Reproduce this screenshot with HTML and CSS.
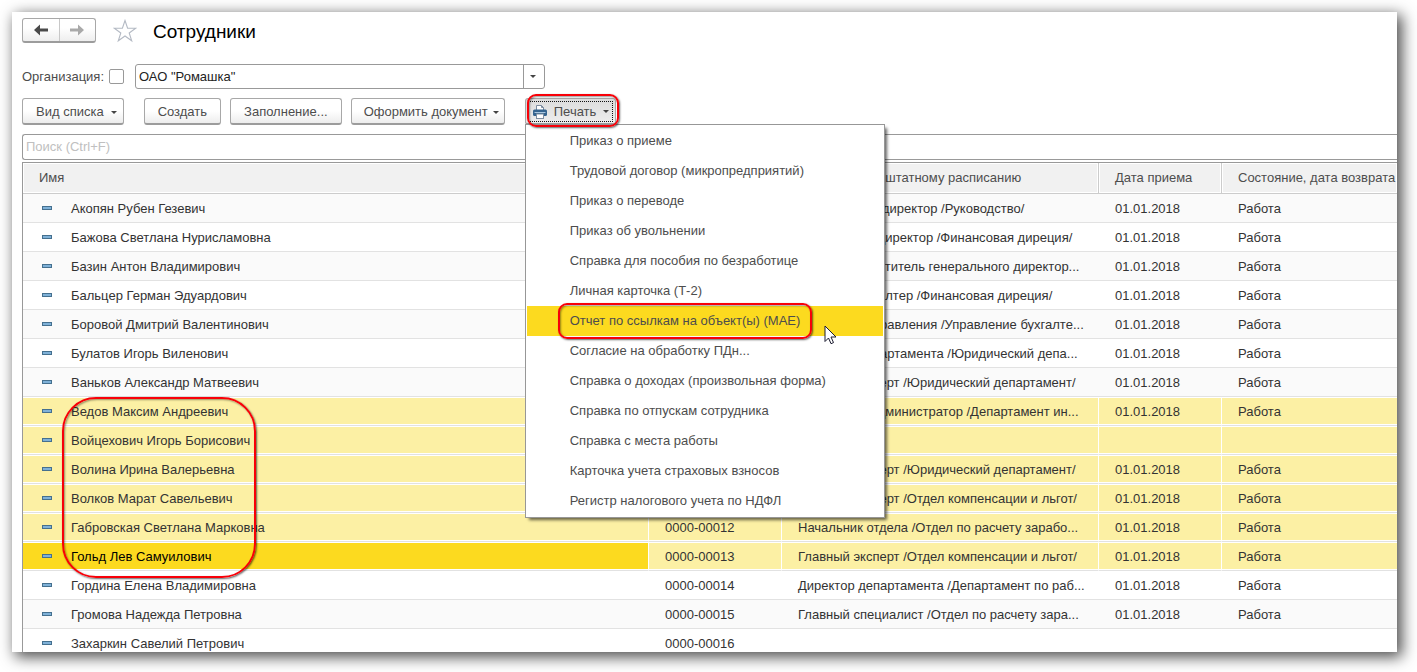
FILE: index.html
```html
<!DOCTYPE html>
<html lang="ru">
<head>
<meta charset="utf-8">
<title>Сотрудники</title>
<link rel="stylesheet" href="styles.css">
</head>
<body>
<main class="window">
  <header class="titlebar">
    <div class="nav">
      <button class="nav-button" type="button" aria-label="Назад">
        <svg width="14" height="12" viewBox="0 0 14 12"><path d="M0 6 6 .5V4.500H14V7.500H6V11.500Z" fill="#4a4a4a"/></svg>
      </button>
      <button class="nav-button" type="button" aria-label="Вперед">
        <svg width="14" height="12" viewBox="0 0 14 12"><path d="M14 6 8 .5V4.500H0V7.500H8V11.500Z" fill="#a9a9a9"/></svg>
      </button>
    </div>
    <button class="star" type="button" aria-label="В избранное">
      <svg width="24" height="24" viewBox="0 0 24 24"><path d="M12 1.500 14.600 9.200H22.700L16.200 14 18.700 21.800 12 17 5.300 21.800 7.800 14 1.300 9.200H9.400Z" fill="#fff" stroke="#b4bac4" stroke-width="1.100"/></svg>
    </button>
    <h1 class="title">Сотрудники</h1>
  </header>

  <div class="filter">
    <label for="org">Организация:</label>
    <input class="check" type="checkbox" aria-label="Отбор по организации">
    <div class="combo">
      <select class="combo-select" id="org"><option>ОАО "Ромашка"</option></select>
    </div>
  </div>

  <div class="toolbar">
    <button class="button button-list" type="button">Вид списка<span class="caret"></span></button>
    <button class="button" type="button">Создать</button>
    <button class="button" type="button">Заполнение...</button>
    <button class="button button-doc" type="button">Оформить документ<span class="caret"></span></button>
    <div class="print">
      <button class="button button-print" type="button">
        <svg width="14" height="14" viewBox="0 0 14 14"><path d="M3.500 6V.5H8.500L10.500 2.500V6" fill="#fff" stroke="#7d8da0"/><path d="M8.500 .5V2.500H10.500" fill="none" stroke="#7d8da0"/><rect y="4.500" width="14" height="6.500" rx="1.500" fill="#35648f"/><rect x="1.500" y="7" width="11" height="1" fill="#a9c7e0"/><rect x="3.500" y="9" width="7" height="4.500" fill="#fff" stroke="#7d8da0"/></svg>
        Печать<span class="caret"></span>
      </button>
      <span class="ring ring-print"></span>
      <div class="menu" role="menu">
        <button class="menu-item" role="menuitem" type="button">Приказ о приеме</button>
        <button class="menu-item" role="menuitem" type="button">Трудовой договор (микропредприятий)</button>
        <button class="menu-item" role="menuitem" type="button">Приказ о переводе</button>
        <button class="menu-item" role="menuitem" type="button">Приказ об увольнении</button>
        <button class="menu-item" role="menuitem" type="button">Справка для пособия по безработице</button>
        <button class="menu-item" role="menuitem" type="button">Личная карточка (Т-2)</button>
        <button class="menu-item active" role="menuitem" type="button">Отчет по ссылкам на объект(ы) (МАЕ)
          <span class="ring ring-item"></span>
          <svg class="cursor" width="13" height="20" viewBox="0 0 13 20"><path d="M1 1V16.500L4.500 13 7 18.700 9.500 17.600 7 12H12Z" fill="#fff" stroke="#1c1c30"/></svg>
        </button>
        <button class="menu-item" role="menuitem" type="button">Согласие на обработку ПДн...</button>
        <button class="menu-item" role="menuitem" type="button">Справка о доходах (произвольная форма)</button>
        <button class="menu-item" role="menuitem" type="button">Справка по отпускам сотрудника</button>
        <button class="menu-item" role="menuitem" type="button">Справка с места работы</button>
        <button class="menu-item" role="menuitem" type="button">Карточка учета страховых взносов</button>
        <button class="menu-item" role="menuitem" type="button">Регистр налогового учета по НДФЛ</button>
      </div>
    </div>
  </div>

  <input class="search" type="search" placeholder="Поиск (Ctrl+F)" aria-label="Поиск">

  <div class="list">
    <table class="grid">
      <colgroup><col class="col-name"><col class="col-code"><col class="col-post"><col class="col-date"><col></colgroup>
      <thead>
        <tr><th>Имя</th><th></th><th>Должность по штатному расписанию</th><th>Дата приема</th><th>Состояние, дата возврата</th></tr>
      </thead>
      <tbody>
        <tr><td>Акопян Рубен Гезевич</td><td></td><td>Генеральный директор /Руководство/</td><td>01.01.2018</td><td>Работа</td></tr>
        <tr><td>Бажова Светлана Нурисламовна</td><td></td><td>Финансовый директор /Финансовая диреция/</td><td>01.01.2018</td><td>Работа</td></tr>
        <tr><td>Базин Антон Владимирович</td><td></td><td>Первый заместитель генерального директор...</td><td>01.01.2018</td><td>Работа</td></tr>
        <tr><td>Бальцер Герман Эдуардович</td><td></td><td>Главный бухгалтер /Финансовая диреция/</td><td>01.01.2018</td><td>Работа</td></tr>
        <tr><td>Боровой Дмитрий Валентинович</td><td></td><td>Начальник управления /Управление бухгалте...</td><td>01.01.2018</td><td>Работа</td></tr>
        <tr><td>Булатов Игорь Виленович</td><td></td><td>Директор департамента /Юридический депа...</td><td>01.01.2018</td><td>Работа</td></tr>
        <tr><td>Ваньков Александр Матвеевич</td><td></td><td>Главный эксперт /Юридический департамент/</td><td>01.01.2018</td><td>Работа</td></tr>
        <tr class="selected"><td>Ведов Максим Андреевич</td><td></td><td>Системный администратор /Департамент ин...</td><td>01.01.2018</td><td>Работа</td></tr>
        <tr class="selected"><td>Войцехович Игорь Борисович</td><td></td><td></td><td></td><td></td></tr>
        <tr class="selected"><td>Волина Ирина Валерьевна</td><td></td><td>Главный эксперт /Юридический департамент/</td><td>01.01.2018</td><td>Работа</td></tr>
        <tr class="selected"><td>Волков Марат Савельевич</td><td></td><td>Главный эксперт /Отдел компенсации и льгот/</td><td>01.01.2018</td><td>Работа</td></tr>
        <tr class="selected"><td>Габровская Светлана Марковна</td><td>0000-00012</td><td>Начальник отдела /Отдел по расчету зарабо...</td><td>01.01.2018</td><td>Работа</td></tr>
        <tr class="selected current"><td>Гольд Лев Самуилович</td><td>0000-00013</td><td>Главный эксперт /Отдел компенсации и льгот/</td><td>01.01.2018</td><td>Работа</td></tr>
        <tr><td>Гордина Елена Владимировна</td><td>0000-00014</td><td>Директор департамента /Департамент по раб...</td><td>01.01.2018</td><td>Работа</td></tr>
        <tr><td>Громова Надежда Петровна</td><td>0000-00015</td><td>Главный специалист /Отдел по расчету зара...</td><td>01.01.2018</td><td>Работа</td></tr>
        <tr><td>Захаркин Савелий Петрович</td><td>0000-00016</td><td></td><td></td><td></td></tr>
      </tbody>
    </table>
    <span class="ring ring-names"></span>
  </div>
</main>
</body>
</html>
```
FILE: styles.css
```css
*, *::before { box-sizing: border-box; }

body {
  margin: 0;
  height: 100vh;
  padding: 12px 20px 20px 12px;
  display: flex;
  background: #fff;
  color: #4d4d4d;
  font: 13px/16px "Liberation Sans", Arial, sans-serif;
}

button, input, select { font: inherit; color: inherit; }

.window {
  flex: 1;
  min-width: 0;
  display: flex;
  flex-direction: column;
  overflow: hidden;
  padding: 6px 0 0 10px;
  background: #fff;
}

body::before {
  content: "";
  position: absolute;
  inset: 12px 20px 20px 12px;
  z-index: -1;
  box-shadow: 4px 4px 14px 1px rgba(0, 0, 0, .7);
}

.titlebar { display: flex; align-items: center; flex: none; height: 25px; }

.nav {
  display: flex;
  width: 74px;
  height: 25px;
  border: 1px solid #a8a8a8;
  border-bottom: 2px solid #9c9c9c;
  border-radius: 3px;
  background: linear-gradient(#fff 40%, #eee);
}

.nav-button {
  flex: 1;
  display: flex;
  align-items: center;
  justify-content: center;
  padding: 0;
  border: 0;
  background: none;
}

.nav-button + .nav-button { border-left: 1px solid #c8c8c8; }

.star { display: flex; margin-left: 17px; padding: 0; border: 0; background: none; }

.title { margin: 0 0 0 16px; padding-top: 2px; color: #000; font-size: 19px; line-height: 24px; font-weight: 400; }

.filter { display: flex; align-items: center; flex: none; margin-top: 21px; height: 25px; }

.check {
  appearance: none;
  width: 15px;
  height: 15px;
  margin: 0 11px 0 5px;
  border: 1px solid #999;
  border-radius: 2px;
  background: #fff;
}

.combo { position: relative; width: 410px; }

.combo-select {
  appearance: none;
  display: block;
  width: 100%;
  height: 25px;
  padding: 0 24px 0 3px;
  border: 1px solid #999;
  border-radius: 3px;
  background: linear-gradient(#999, #999) right 20px top / 1px 100% no-repeat #fff;
  color: #222;
}

.combo::after {
  content: "";
  position: absolute;
  right: 9px;
  top: 11px;
  border: solid transparent;
  border-width: 3px 3px 0;
  border-top-color: #444;
}

.toolbar { display: flex; flex: none; gap: 9px; margin-top: 9px; height: 27px; }

.button {
  display: flex;
  align-items: center;
  height: 27px;
  padding: 2px 13px 0;
  border: 1px solid #a8a8a8;
  border-bottom: 2px solid #9c9c9c;
  border-radius: 3px;
  background: linear-gradient(#fff 50%, #ededed);
  white-space: nowrap;
}

.caret {
  margin-left: 7px;
  border: solid transparent;
  border-width: 3px 3px 0;
  border-top-color: #444;
}

.button-list { padding-right: 6px; margin-right: 11px; }
.button-doc { padding: 2px 5px 0 12px; margin-right: 11px; }
.button-doc .caret { margin-left: 5px; }

.print { position: relative; }

.button-print {
  gap: 7px;
  padding: 1px 6px 0 7px;
  background: linear-gradient(#dcdcdc, #eee);
  outline: 1px dotted #111;
  outline-offset: -4px;
}

.button-print .caret { margin-left: 0; }

.ring {
  position: absolute;
  border: 2px solid #f80008;
  border-radius: 9px;
  box-shadow: 1px 1px 2px rgba(0, 0, 0, .6), inset 1px 1px 2px rgba(0, 0, 0, .4);
  pointer-events: none;
}

.ring-print { inset: -4px -3px -2px 2px; z-index: 3; }

.menu {
  position: absolute;
  top: 26px;
  left: 0;
  z-index: 2;
  width: 360px;
  padding: 1px;
  border: 1px solid #979797;
  background: #fff;
  box-shadow: 3px 3px 3px -1px rgba(0, 0, 0, .6);
}

.menu-item {
  position: relative;
  display: block;
  width: 100%;
  height: 30px;
  padding: 0 0 0 43px;
  border: 0;
  background: none;
  text-align: left;
}

.menu-item.active { background: #fcda1f; }

.ring-item { inset: -3px 71px -3px 31px; z-index: 1; }

.cursor { position: absolute; left: 297px; top: 19px; z-index: 2; }

.search {
  appearance: none;
  flex: none;
  height: 26px;
  margin: 9px 0 2px;
  padding: 0 3px 2px;
  border: 1px solid #999;
  border-right: 0;
  border-radius: 3px 0 0 3px;
  background: #fff;
}

.search::placeholder { color: #c0c0c0; opacity: 1; }

.list {
  position: relative;
  flex: 1;
  min-height: 0;
  border: solid #999;
  border-width: 1px 0 0 1px;
}

.grid { width: 100%; table-layout: fixed; border-collapse: separate; border-spacing: 0; }

.col-name { width: 625px; }
.col-code { width: 133px; }
.col-post { width: 317px; }
.col-date { width: 123px; }

.grid th {
  height: 31px;
  padding: 0 0 0 16px;
  border: solid #ccc;
  border-width: 0 0 1px 1px;
  background: #f1f1f1;
  box-shadow: inset 0 0 0 1px #fff;
  font-weight: 400;
  text-align: left;
  white-space: nowrap;
}

.grid th:first-child { border-left: 0; }

.grid td {
  height: 29px;
  padding: 2px 0 0 17px;
  border-bottom: 1px solid #e2e2e2;
  color: #333;
  white-space: nowrap;
}

.grid td:first-child { padding-left: 16px; }

.grid tr:nth-child(odd) td { background: #fafafa; }

.grid td:first-child::before {
  content: "";
  display: inline-block;
  width: 10px;
  height: 4px;
  margin: 0 19px 3px 3px;
  border: 1px solid #45708f;
  background: #7fb1d8;
}

.grid tbody .selected td {
  background: #fcf0a4;
  border-left: 1px solid #fff;
  box-shadow: inset 0 1px #fff, inset 0 -1px #fff;
  padding-left: 16px;
}

.grid tbody .selected:nth-child(n) td { background: #fcf0a4; }
.grid tbody .selected td:first-child { border-left: 0; }
.grid tbody .current:nth-child(n) td:first-child { background: #fcda1f; color: #000; }

.ring-names {
  left: 39px;
  top: 234px;
  width: 194px;
  height: 181px;
  border-radius: 34px;
}
```
